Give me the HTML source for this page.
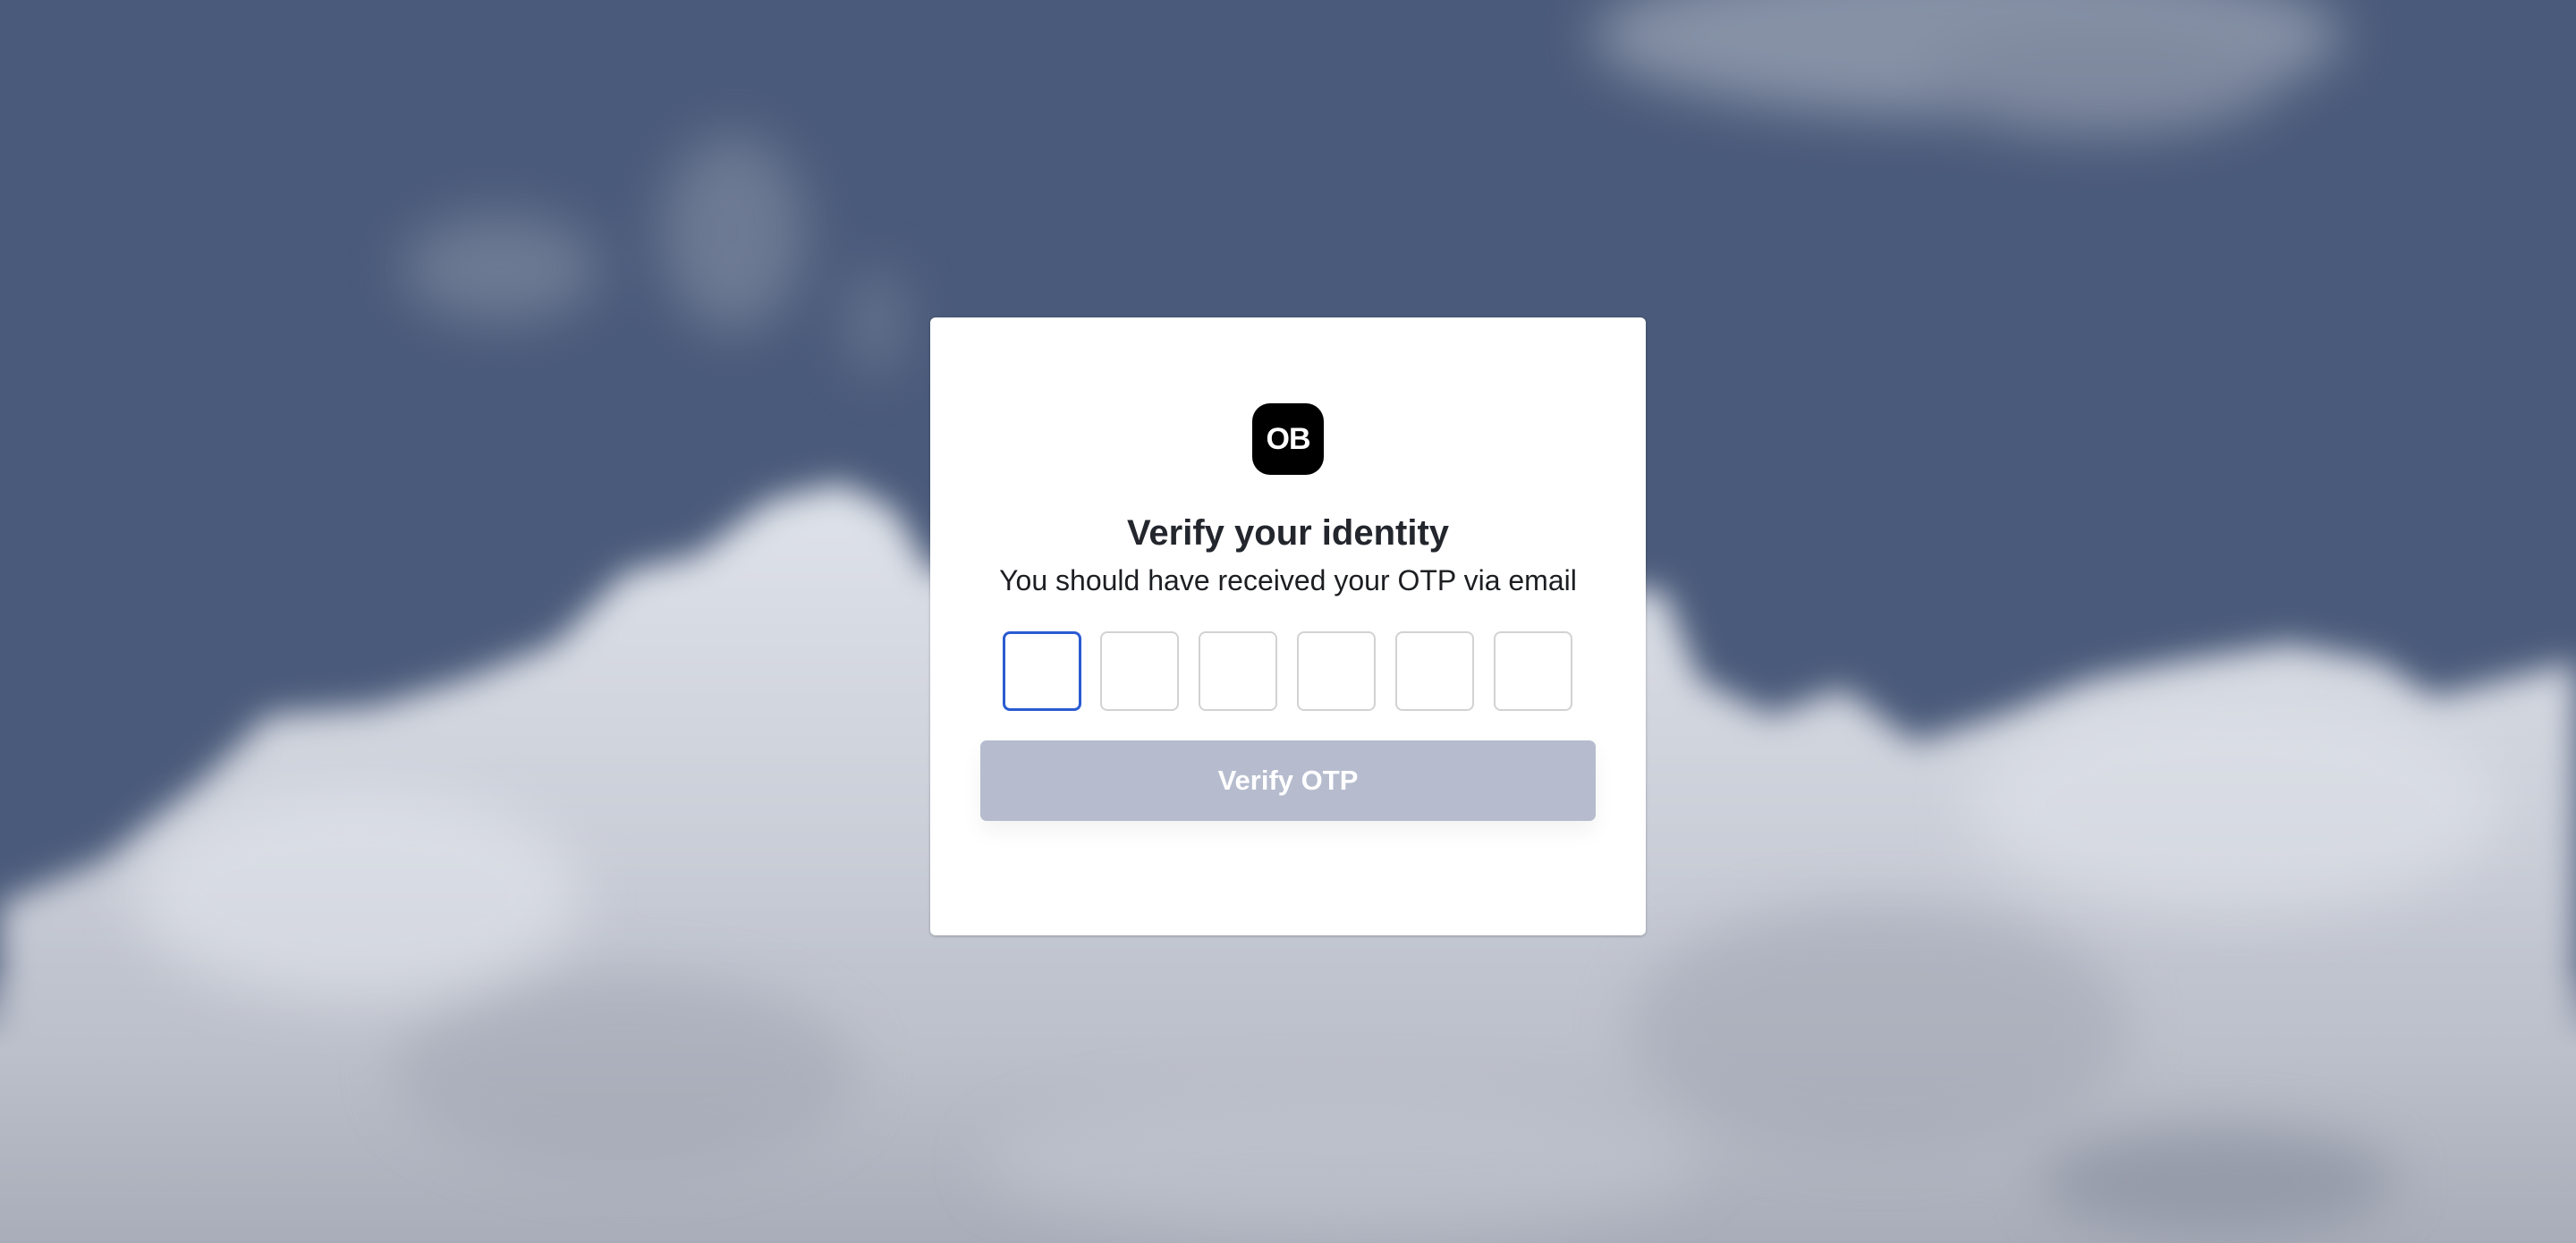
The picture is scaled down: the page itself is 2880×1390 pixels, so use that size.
<!DOCTYPE html>
<html><head><meta charset="utf-8"><style>
html,body{margin:0;padding:0;width:2880px;height:1390px;overflow:hidden;background:#4a5a7a;font-family:"Liberation Sans",sans-serif}
.bgw{position:absolute;left:0;top:0;width:2880px;height:1390px;overflow:hidden}
svg.bg{display:block}
.card{position:absolute;left:1040px;top:355px;width:800px;height:691px;background:#fff;border-radius:6px;box-shadow:0 1px 3px rgba(0,0,0,.25)}
.logo{position:absolute;left:360px;top:96px;width:80px;height:80px;background:#000;border-radius:20px;color:#fff;font-weight:bold;font-size:34px;line-height:80px;text-align:center;letter-spacing:-1px}
h1{position:absolute;left:0;width:800px;top:216px;margin:0;text-align:center;font-size:40px;line-height:50px;color:#23262d;font-weight:bold}
.sub{position:absolute;left:0;width:800px;top:274px;text-align:center;font-size:32px;line-height:40px;color:#1c1e22}
.box{position:absolute;top:351px;width:84px;height:85px;border:2px solid #d2d2d2;border-radius:8px}
.box.f{border:3px solid #2a5bd2;width:82px;height:83px}
.btn{position:absolute;left:56px;top:473px;width:688px;height:90px;background:#b6bcce;border-radius:7px;color:#fff;font-weight:bold;font-size:31px;line-height:90px;text-align:center;box-shadow:0 12px 24px rgba(0,0,0,.05)}
</style></head><body>
<div class="bgw">
<svg class="bg" width="2880" height="1390" viewBox="0 0 2880 1390">
<defs>
<filter id="b" filterUnits="userSpaceOnUse" x="0" y="0" width="2880" height="1390"><feGaussianBlur stdDeviation="18"/></filter>
<filter id="b2" filterUnits="userSpaceOnUse" x="0" y="0" width="2880" height="1390"><feGaussianBlur stdDeviation="30"/></filter>
<linearGradient id="g" gradientUnits="userSpaceOnUse" x1="0" y1="540" x2="0" y2="1390">
<stop offset="0" stop-color="#dfe3ea"/><stop offset="0.5" stop-color="#c9cdd7"/><stop offset="1" stop-color="#a9adb9"/></linearGradient>
<linearGradient id="g2" gradientUnits="userSpaceOnUse" x1="0" y1="1080" x2="0" y2="1390">
<stop offset="0" stop-color="#c4c8d2" stop-opacity="0"/><stop offset="0.3" stop-color="#bcc0ca" stop-opacity="1"/><stop offset="1" stop-color="#a9adb9"/></linearGradient>
</defs>
<rect width="2880" height="1390" fill="#4a5a7a"/>
<g filter="url(#b2)" opacity="0.55">
<ellipse cx="2200" cy="40" rx="420" ry="90" fill="#b8bfca"/>
<ellipse cx="2350" cy="90" rx="200" ry="60" fill="#aab1be"/>
<ellipse cx="560" cy="300" rx="110" ry="60" fill="#8a94a8"/>
<ellipse cx="820" cy="260" rx="80" ry="110" fill="#8a94a8"/>
<ellipse cx="980" cy="360" rx="30" ry="60" fill="#7f8aa0"/>
</g>
<path filter="url(#b)" fill="url(#g)" d="M0 1010 L120 960 L220 880 L300 800 L420 790 L520 760 L620 720 L700 640 L780 620 L860 560 L940 540 L1000 570 L1040 640 L1860 660 L1900 760 L1980 800 L2060 770 L2140 830 L2240 800 L2340 760 L2440 740 L2560 720 L2660 740 L2720 780 L2800 760 L2880 740 L2880 1390 L0 1390 Z"/>
<rect x="0" y="1080" width="2880" height="310" fill="url(#g2)"/>
<g filter="url(#b2)" opacity="0.5">
<ellipse cx="400" cy="1000" rx="250" ry="120" fill="#e8ebf1"/>
<ellipse cx="2500" cy="900" rx="300" ry="120" fill="#e3e6ec"/>
<ellipse cx="700" cy="1200" rx="260" ry="110" fill="#9ea3b0"/>
<ellipse cx="2100" cy="1150" rx="280" ry="140" fill="#9ea3b0"/>
<ellipse cx="2480" cy="1320" rx="200" ry="60" fill="#7d8394"/>
<ellipse cx="1500" cy="1300" rx="400" ry="80" fill="#c5c9d2"/>
</g>
</svg>
</div>
<div class="card">
<div class="logo">OB</div>
<h1>Verify your identity</h1>
<div class="sub">You should have received your OTP via email</div>
<div class="box f" style="left:81px"></div>
<div class="box" style="left:190px"></div>
<div class="box" style="left:300px"></div>
<div class="box" style="left:410px"></div>
<div class="box" style="left:520px"></div>
<div class="box" style="left:630px"></div>
<div class="btn">Verify OTP</div>
</div>
</body></html>
